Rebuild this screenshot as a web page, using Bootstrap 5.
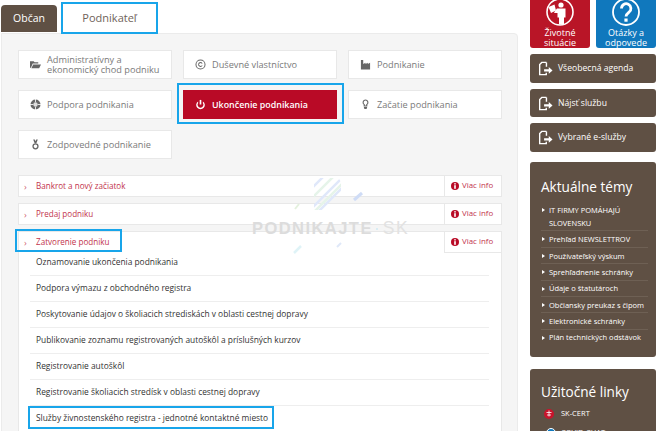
<!DOCTYPE html>
<html lang="sk">
<head>
    <meta charset="UTF-8">
    <meta name="viewport" content="width=device-width, initial-scale=1.0">
    <title>Podnikateľ</title>
    <link href="https://cdn.jsdelivr.net/npm/bootstrap@5.3.0/dist/css/bootstrap.min.css" rel="stylesheet">
    <style>
        html, body { height: 431px; overflow: hidden; }
        body { font-family: "Open Sans", "Noto Sans", sans-serif; font-size: 8.4px; color: #333; background: #fff; }
        a { text-decoration: none; }
        .page-wrap { width: 656px; height: 431px; overflow: hidden; }
        .main-col { width: 519px; margin-left: 1px; padding: 5px 2px 0 0; }
        .side-col { width: 126px; margin-left: 10px; }

        .tab-strip { height: 28px; gap: 6px; }
        .tab-item { display: flex; align-items: center; justify-content: center; height: 27px; border-radius: 4px 4px 0 0; font-size: 10.5px; }
        .tab-citizen { width: 56px; background: #5f5044; color: #fff; }
        .tab-business { width: 93px; height: 28px; margin-top: -1px; font-size: 11px; color: #6f6259; background: #fff; border-radius: 0; outline: 2px solid #18a5ea; position: relative; z-index: 1; }

        .panel-box { background: #f5f5f5; border: 1px solid #ebebeb; border-radius: 0 4px 0 0; padding: 16px 15px 0 16px; height: 400px; position: relative; }
        .tile-grid { display: grid; grid-template-columns: 154px 154px 154px; column-gap: 11px; row-gap: 11px; }
        .tile-btn { display: flex; align-items: center; height: 29px; background: #fff; border: 1px solid #e8e8e8; color: #7a7a7a; padding-left: 11px; line-height: 10px; font-size: 9.2px; }
        .tile-btn svg { width: 11px; height: 11px; flex: none; margin-right: 6px; fill: #666; }
        .tile-active { background: #b90a26; border-color: #b90a26; color: #fff; position: relative; font-size: 8.9px; }
        .tile-active svg { fill: #fff; }
        .tile-active::after { content: ""; position: absolute; left: -7px; right: -8px; top: -8px; bottom: -6px; border: 2px solid #18a5ea; }

        .acc-stack { margin-top: 16px; }
        .acc-row { display: flex; height: 22px; background: #fff; border: 1px solid #e8e8e8; margin-bottom: 6px; color: #c2334c; }
        .acc-title { flex: 1; display: flex; align-items: center; padding-left: 5px; font-size: 8.1px; white-space: nowrap; color: inherit; }
        .acc-title i { font-style: normal; width: 12px; font-size: 9px; line-height: 9px; color: #d0606f; }
        .acc-more { width: 57px; border-left: 1px solid #e8e8e8; display: flex; align-items: center; padding-left: 6px; font-size: 7.9px; color: inherit; }
        .info-dot { width: 8px; height: 8px; margin-right: 3px; flex: none; }
        .acc-open { height: 230px; margin-bottom: 0; border-bottom: 0; display: block; position: relative; }
        .acc-open::after { content: ""; position: absolute; left: -4px; top: -3px; width: 107px; height: 23px; border: 2px solid #18a5ea; }
        .acc-head { display: flex; height: 18px; }
        .acc-head .acc-title { flex: none; height: 20px; }
        .acc-head .acc-more { margin-left: auto; height: 21px; border-bottom: 1px solid #e8e8e8; background: #fff; position: relative; z-index: 1; }

        .sub-list { margin: 0 12px 0 11px; }
        .sub-item { display: flex; align-items: center; height: 26px; padding-left: 6px; border-bottom: 1px solid #eee; color: #333; }
        .sub-marked { position: relative; }
        .sub-marked::after { content: ""; position: absolute; left: -2px; top: 0; width: 246px; height: 23px; border: 2px solid #18a5ea; }

        .water-mark { position: absolute; left: 250px; top: 144px; width: 160px; height: 80px; pointer-events: none; }
        .water-text { position: absolute; left: 0; top: 40px; font-family: "Liberation Sans", sans-serif; font-weight: 700; font-size: 16.5px; line-height: 20px; color: #dcdcdc; letter-spacing: 1.45px; white-space: nowrap; }
        .water-text span { font-weight: 400; margin-left: 10px; color: #e2e2e2; font-size: 17.5px; }

        .quick-tiles { display: flex; gap: 6px; height: 48px; }
        .quick-tile { width: 60px; border-radius: 0 0 3px 3px; color: #fff; text-align: center; font-size: 9px; line-height: 10px; display: flex; flex-direction: column; overflow: hidden; }
        .quick-red { background: #b91527; }
        .quick-blue { background: #1078bd; }
        .quick-tile svg { display: block; margin: -2px auto 0; flex: none; }

        .agenda-btn { display: flex; align-items: center; height: 28.7px; margin-top: 6px; background: #5f5044; border-radius: 3px; color: #fff; font-size: 8.6px; padding-left: 8px; }
        .agenda-btn svg { width: 15px; height: 15px; margin-right: 5px; flex: none; }
        .side-panel { background: #5f5044; border-radius: 3px; color: #fff; padding-left: 11px; padding-right: 8px; }
        .panel-news { height: 195px; margin-top: 10px; padding-top: 15px; }
        .panel-links { height: 70px; margin-top: 12px; padding-top: 13px; }
        .side-title { font-size: 13.6px; line-height: 20px; font-weight: 400; margin: 0 0 5px; }
        .news-list { list-style: none; margin: 0; padding: 0; font-size: 7.5px; }
        .news-list li { position: relative; padding: 1.7px 0 .7px 8px; line-height: 13px; border-bottom: 1px solid #6e6054; }
        .news-list li:last-child { border-bottom: 0; }
        .news-list li::before { content: ""; position: absolute; left: 1px; top: 6px; border-left: 3px solid #fff; border-top: 2px solid transparent; border-bottom: 2px solid transparent; }
        .link-line { display: flex; align-items: center; font-size: 7.5px; gap: 7px; height: 14px; margin-left: 3px; }
        .link-next { margin-top: 5px; }
        .link-next svg { margin-left: 2px; margin-right: -2px; }
    </style>
</head>
<body>
<svg width="0" height="0" class="position-absolute">
    <symbol id="ico-info" viewBox="0 0 10 10"><circle cx="5" cy="5" r="5" fill="#b90a26"/><rect x="4" y="1.500" width="2" height="1.600" fill="#fff"/><rect x="4" y="4" width="2" height="4.500" fill="#fff"/></symbol>
    <symbol id="ico-doc" viewBox="0 0 16 16"><path d="M9 1.500H4L1.800 3.700v10.800h7V12.500M9 1.500v4.500" fill="none" stroke="#fff" stroke-width="1.500"/><path d="M6.500 8.800h5V6.500L15.500 10l-4 3.500v-2.300h-5z" fill="#fff"/></symbol>
</svg>
<div class="page-wrap d-flex">
    <div class="main-col">
        <div class="tab-strip d-flex">
            <a class="tab-item tab-citizen" href="#">Občan</a>
            <a class="tab-item tab-business" href="#">Podnikateľ</a>
        </div>
        <div class="panel-box">
            <div class="tile-grid">
                <a class="tile-btn" href="#"><svg viewBox="0 0 12 12"><path d="M0 2.500h4l1 1h4v1.500H3L1 9.500H0zM3.500 6H12l-2 4H1.500z"/></svg><span>Administratívny a<br>ekonomický chod podniku</span></a>
                <a class="tile-btn" href="#"><svg viewBox="0 0 12 12"><path fill-rule="evenodd" d="M6 .5a5.500 5.500 0 1 0 0 11 5.500 5.500 0 0 0 0-11zm0 1.100a4.400 4.400 0 1 1 0 8.800 4.400 4.400 0 0 1 0-8.800zM6 3.400a2.600 2.600 0 1 0 2.300 3.800l-.9-.4A1.600 1.600 0 1 1 7.400 5.200l.9-.4A2.600 2.600 0 0 0 6 3.400z"/></svg><span>Duševné vlastníctvo</span></a>
                <a class="tile-btn" href="#"><svg viewBox="0 0 12 12"><path d="M1 1h2.500v4.500L6 4v1.500L8.500 4v1.500L11 4v7.500H1z"/></svg><span>Podnikanie</span></a>
                <a class="tile-btn" href="#"><svg viewBox="0 0 12 12"><circle cx="6" cy="6" r="5.500"/><path d="M0 6h3.500M8.500 6H12M6 0v3.500M6 8.500V12" stroke="#fff" stroke-width=".9" fill="none"/><circle cx="6" cy="6" r="2.400" fill="#ddd"/></svg><span>Podpora podnikania</span></a>
                <a class="tile-btn tile-active" href="#"><svg viewBox="0 0 12 12"><path d="M5.100 1h1.800v5H5.100z"/><path d="M3.400 2.600v2a3.100 3.100 0 1 0 5.200 0v-2a4.700 4.700 0 1 1-5.200 0z"/></svg><span class="fw-semibold">Ukončenie podnikania</span></a>
                <a class="tile-btn" href="#"><svg viewBox="0 0 12 12"><path fill-rule="evenodd" d="M6 .5a3.300 3.300 0 0 0-2 5.900V8.200h4V6.400A3.300 3.300 0 0 0 6 .5zm0 1.200a2.100 2.100 0 0 1 1 3.900l-.3.200v1.300H5.300V5.800L5 5.600a2.100 2.100 0 0 1 1-3.900z"/><path d="M4.300 8.800h3.400v1L7 11H5l-.7-1.200z"/></svg><span>Začatie podnikania</span></a>
                <a class="tile-btn" href="#"><svg viewBox="0 0 12 12"><path d="M3.500.5h1.700L6 2.500 6.800.5h1.700L7.200 4 6 4.800 4.800 4z"/><path fill-rule="evenodd" d="M6 4.600a3.400 3.400 0 1 0 0 6.800 3.400 3.400 0 0 0 0-6.800zm0 1.400a2 2 0 1 1 0 4 2 2 0 0 1 0-4z"/></svg><span>Zodpovedné podnikanie</span></a>
            </div>

            <div class="acc-stack">
                <div class="acc-row">
                    <a class="acc-title" href="#"><i>›</i>Bankrot a nový začiatok</a>
                    <a class="acc-more" href="#"><svg class="info-dot"><use href="#ico-info"/></svg>Viac info</a>
                </div>
                <div class="acc-row">
                    <a class="acc-title" href="#"><i>›</i>Predaj podniku</a>
                    <a class="acc-more" href="#"><svg class="info-dot"><use href="#ico-info"/></svg>Viac info</a>
                </div>
                <div class="acc-row acc-open">
                    <div class="acc-head">
                        <a class="acc-title" href="#"><i>›</i>Zatvorenie podniku</a>
                        <a class="acc-more" href="#"><svg class="info-dot"><use href="#ico-info"/></svg>Viac info</a>
                    </div>
                    <div class="sub-list">
                        <a class="sub-item" href="#">Oznamovanie ukončenia podnikania</a>
                        <a class="sub-item" href="#">Podpora výmazu z obchodného registra</a>
                        <a class="sub-item" href="#">Poskytovanie údajov o školiacich strediskách v oblasti cestnej dopravy</a>
                        <a class="sub-item" href="#">Publikovanie zoznamu registrovaných autoškôl a príslušných kurzov</a>
                        <a class="sub-item" href="#">Registrovanie autoškôl</a>
                        <a class="sub-item" href="#">Registrovanie školiacich stredísk v oblasti cestnej dopravy</a>
                        <a class="sub-item sub-marked" href="#">Služby živnostenského registra - jednotné kontaktné miesto</a>
                    </div>
                </div>
            </div>

            <div class="water-mark">
                <svg width="160" height="80" viewBox="0 0 160 80" fill="none">
                    <clipPath id="wm-clip"><path d="M62 6q0-6 6-6h15q6 0 6 6v8q0 4-4 8l-10 10H62z"/></clipPath>
                    <g clip-path="url(#wm-clip)" stroke-width="2.500">
                        <path d="M58 12 74 -4M58 32 92 -2M64 36 98 2" stroke="#e0e8fa"/>
                        <path d="M58 22 84 -4M62 34 96 0" stroke="#e6f4ea"/>
                    </g>
                    <path d="M102 22 110 15" stroke="#cfdcf6" stroke-width="3"/>
                    <path d="M43 31 47 26" stroke="#e4f1de" stroke-width="2"/>
                    <path d="M42 75 49 68" stroke="#dff3f7" stroke-width="2.500"/>
                    <path d="M85 69 89 65" stroke="#dfe8f8" stroke-width="2"/>
                    <circle cx="125" cy="51" r="1" fill="#cfeaf3"/>
                </svg>
                <div class="water-text">PODNIKAJTE<span>SK</span></div>
            </div>
        </div>
    </div>

    <div class="side-col">
        <div class="quick-tiles">
            <a class="quick-tile quick-red" href="#">
                <svg width="30" height="30" viewBox="0 0 30 30"><circle cx="15" cy="14" r="13" fill="none" stroke="#fff" stroke-width="1.600"/><circle cx="16" cy="7" r="2.600" fill="#fff"/><path d="M12 10.500h8.500v9h-1.500v7h-5v-7h-1.500v-4.500L9 15l1-2z" fill="#fff"/><path d="M3.500 9l6-2.500 1.500 6-5 2.500z" fill="#fff"/></svg>
                <span>Životné<br>situácie</span>
            </a>
            <a class="quick-tile quick-blue" href="#">
                <svg width="30" height="30" viewBox="0 0 30 30"><circle cx="15" cy="14" r="13" fill="none" stroke="#fff" stroke-width="1.800"/><path d="M10.500 10.500a4.700 4.700 0 1 1 7.500 3.700c-1.800 1.400-3 2.100-3 4.300" fill="none" stroke="#fff" stroke-width="2.800"/><rect x="13.400" y="20.500" width="3.200" height="3.200" fill="#fff"/></svg>
                <span>Otázky a<br>odpovede</span>
            </a>
        </div>
        <a class="agenda-btn" href="#"><svg><use href="#ico-doc"/></svg>Všeobecná agenda</a>
        <a class="agenda-btn" href="#"><svg><use href="#ico-doc"/></svg>Nájsť službu</a>
        <a class="agenda-btn" href="#"><svg><use href="#ico-doc"/></svg>Vybrané e-služby</a>

        <div class="side-panel panel-news">
            <h2 class="side-title">Aktuálne témy</h2>
            <ul class="news-list">
                <li>IT FIRMY POMÁHAJÚ SLOVENSKU</li>
                <li>Prehľad NEWSLETTROV</li>
                <li>Používateľský výskum</li>
                <li>Sprehľadnenie schránky</li>
                <li>Údaje o štatutároch</li>
                <li>Občiansky preukaz s čipom</li>
                <li>Elektronické schránky</li>
                <li>Plán technických odstávok</li>
            </ul>
        </div>
        <div class="side-panel panel-links">
            <h2 class="side-title">Užitočné linky</h2>
            <div class="link-line">
                <svg width="10" height="10" viewBox="0 0 10 10"><circle cx="5" cy="5" r="5" fill="#c9142c"/><path d="M5 1.500v6M2.500 3.500h5M3 6h4" stroke="#fff" stroke-width=".8"/></svg>
                <span>SK-CERT</span>
            </div>
            <div class="link-line link-next">
                <svg width="10" height="10" viewBox="0 0 10 10"><circle cx="5" cy="5" r="4.500" fill="#1078bd" stroke="#fff"/></svg>
                <span>COVID-CHAT</span>
            </div>
        </div>
    </div>
</div>
</body>
</html>
